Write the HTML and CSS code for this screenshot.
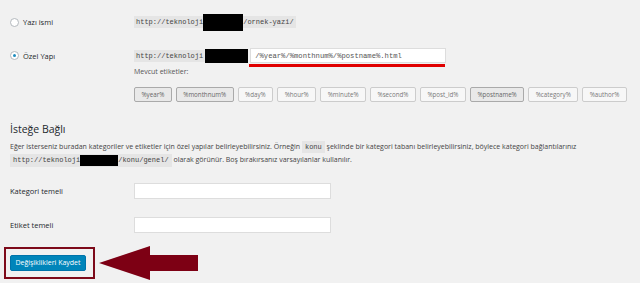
FILE: index.html
```html
<!DOCTYPE html>
<html lang="tr">
<head>
    <meta charset="UTF-8">
    <meta name="viewport" content="width=device-width, initial-scale=1.0">
    <title>Kalıcı Bağlantı Ayarları</title>
    <link rel="stylesheet" href="styles.css">
</head>
<body>
    <div class="page">
        <div class="row row-plain">
            <label class="choice"><span class="radio"></span>Yazı ismi</label>
            <div class="field">
                <code class="url">http://teknoloji<span class="redact redact-tall"></span>/ornek-yazi/</code>
            </div>
        </div>

        <div class="row row-custom">
            <label class="choice"><span class="radio checked"></span>Özel Yapı</label>
            <div class="field">
                <code class="url">http://teknoloji</code><span class="redact"></span>
                <div class="structure">
                    <input type="text" class="structure-input" value="/%year%/%monthnum%/%postname%.html">
                    <!-- highlight under the input -->
                    <div class="underline"></div>
                </div>
            </div>
        </div>

        <div class="available">
            <p class="hint">Mevcut etiketler:</p>
            <div class="tags">
                <button class="tag active">%year%</button>
                <button class="tag active">%monthnum%</button>
                <button class="tag">%day%</button>
                <button class="tag">%hour%</button>
                <button class="tag">%minute%</button>
                <button class="tag">%second%</button>
                <button class="tag">%post_id%</button>
                <button class="tag active">%postname%</button>
                <button class="tag">%category%</button>
                <button class="tag">%author%</button>
            </div>
        </div>

        <h3>İsteğe Bağlı</h3>
        <p class="desc">Eğer isterseniz buradan kategoriler ve etiketler için özel yapılar belirleyebilirsiniz. Örneğin <code>konu</code> şeklinde bir kategori tabanı belirleyebilirsiniz, böylece kategori bağlantılarınız<br><code class="url-inline">http://teknoloji<span class="redact redact-line"></span>/konu/genel/</code> olarak görünür. Boş bırakırsanız varsayılanlar kullanılır.</p>

        <div class="form-row first">
            <label for="category_base">Kategori temeli</label>
            <input type="text" id="category_base" class="base-input">
        </div>
        <div class="form-row">
            <label for="tag_base">Etiket temeli</label>
            <input type="text" id="tag_base" class="base-input">
        </div>

        <div class="submit-row">
            <div class="submit-box">
                <input type="submit" class="button-primary" value="Değişiklikleri Kaydet">
            </div>
            <svg class="arrow" width="101" height="36" viewBox="0 0 101 36">
                <polygon points="2,18 53,1 53,10 101,10 101,26 53,26 53,35" fill="#7d0014"/>
            </svg>
        </div>
    </div>
</body>
</html>
```

FILE: styles.css
```css
body {
    margin: 0;
    background-color: #f1f1f1;
    font-family: 'Open Sans', sans-serif;
    color: #23282d;
}

.page {
    padding: 13px 10px 0;
}

.row {
    display: flex;
    align-items: center;
}

.row-plain {
    height: 18px;
}

.row-custom {
    height: 15px;
    margin-top: 17px;
}

.choice {
    width: 124px;
    display: flex;
    align-items: center;
    font-size: 7.5px;
}

.radio {
    width: 7px;
    height: 7px;
    border: 1px solid #b4b9be;
    border-radius: 50%;
    background-color: #fff;
    margin-right: 4px;
    position: relative;
}

.radio.checked::after {
    content: "";
    position: absolute;
    left: 2px;
    top: 2px;
    width: 3px;
    height: 3px;
    border-radius: 50%;
    background-color: #1e8cbe;
}

.field {
    display: flex;
    align-items: center;
}

.url, .url-inline, .desc code {
    font-family: 'Liberation Mono', monospace;
    font-size: 7px;
    background-color: #e5e5e5;
    color: #444;
    padding: 2px 2px;
    display: inline-flex;
    align-items: center;
}

.url {
    height: 12px;
    box-sizing: border-box;
}

.redact {
    display: inline-block;
    width: 43px;
    height: 14px;
    background-color: #000;
}

.redact-tall {
    width: 40px;
    height: 17px;
}

.redact-line {
    width: 38px;
    height: 11px;
}

.structure {
    position: relative;
    margin-left: 2px;
    height: 15px;
}

.structure-input {
    display: block;
    width: 196px;
    height: 15px;
    box-sizing: border-box;
    border: 1px solid #ddd;
    background-color: #fff;
    font-family: 'Liberation Mono', monospace;
    font-size: 7.2px;
    color: #555;
    padding: 0 4px;
    outline: none;
}

.underline {
    position: absolute;
    left: -1px;
    top: 16px;
    width: 196px;
    height: 3px;
    background-color: #e00000;
}

.available {
    margin-left: 124px;
}

.hint {
    margin: 3px 0 0;
    font-size: 7px;
    line-height: 11px;
    color: #555;
}

.tags {
    display: flex;
    gap: 4px;
    margin-top: 10px;
}

.tag {
    height: 15px;
    margin: 0;
    padding: 0 6.5px;
    border: 1px solid #ccc;
    border-radius: 2px;
    background-color: #f7f7f7;
    font-family: 'Open Sans', sans-serif;
    font-size: 6.2px;
    color: #777;
}

.tag.active {
    background-color: #e9e9e9;
    border-color: #aaa;
    color: #666;
}

h3 {
    margin: 20px 0 0;
    font-size: 10.5px;
    line-height: 14px;
    font-weight: normal;
    color: #23282d;
}

.desc {
    margin: 4px 0 0;
    font-size: 7px;
    line-height: 13px;
    color: #444;
}

.desc code {
    padding: 1px 3px;
    line-height: 10px;
}

.url-inline {
    padding: 1px 3px;
}

.form-row {
    display: flex;
    align-items: center;
    margin-top: 18px;
}

.form-row.first {
    margin-top: 16px;
}

.form-row label {
    width: 124px;
    font-size: 7.5px;
}

.base-input {
    width: 197px;
    height: 16px;
    box-sizing: border-box;
    border: 1px solid #ddd;
    background-color: #fff;
    outline: none;
}

.submit-row {
    display: flex;
    align-items: center;
    margin: 12px 0 0 -6px;
}

.submit-box {
    border: 2px solid #7d0a1a;
    padding: 6px 7px 6px 4px;
}

.button-primary {
    display: block;
    width: 76px;
    height: 16px;
    background-color: #0085ba;
    border: 1px solid #0073aa;
    border-radius: 2px;
    color: #fff;
    font-family: 'Open Sans', sans-serif;
    font-size: 7px;
    padding: 0;
}

.arrow {
    margin-left: 2px;
}
```
